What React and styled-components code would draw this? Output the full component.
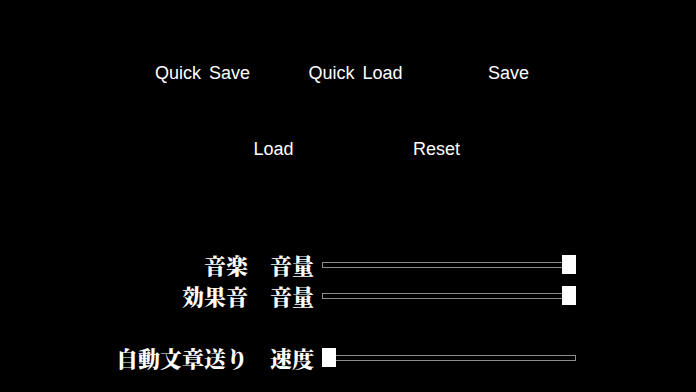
import React from "react";
import styled, { createGlobalStyle } from "styled-components";

const GlobalStyle = createGlobalStyle`
  html, body {
    margin: 0;
    padding: 0;
    background: #000;
  }
`;

const Screen = styled.div`
  width: 696px;
  height: 392px;
  background: #000;
  color: #fff;
  overflow: hidden;
  display: flex;
  flex-direction: column;
`;

const Menu = styled.nav`
  margin-top: 61px;
  display: flex;
  flex-direction: column;
  gap: 52px;
`;

const MenuRow = styled.div`
  display: flex;
  justify-content: center;
  padding-left: ${(p) => p.shift || 0}px;
`;

const MenuButton = styled.button`
  width: ${(p) => p.w}px;
  height: 24px;
  padding: 0;
  border: none;
  background: transparent;
  color: #fff;
  font-family: "Liberation Sans", "Noto Sans CJK JP", sans-serif;
  font-size: 18px;
  line-height: 24px;
  word-spacing: 3px;
  text-align: center;
  cursor: pointer;
`;

const Settings = styled.div`
  margin-top: 88px;
  display: grid;
  grid-template-columns: 314px 254px;
  column-gap: 8px;
  grid-auto-rows: 31px;
`;

const Label = styled.div`
  text-align: right;
  font-family: "Noto Serif CJK JP", "Noto Sans CJK JP", serif;
  font-weight: 900;
  font-size: 22px;
  line-height: 31px;
  white-space: pre;
  margin-top: ${(p) => (p.spaced ? 31 : 0)}px;
`;

const Slider = styled.div`
  position: relative;
  height: 31px;
  margin-top: ${(p) => (p.spaced ? 31 : 0)}px;
  display: flex;
  align-items: center;
`;

const Track = styled.div`
  width: 100%;
  height: 6px;
  box-sizing: border-box;
  border: 1px solid #8c8c8c;
  background: #000;
`;

const Thumb = styled.div`
  position: absolute;
  top: 6px;
  width: 14px;
  height: 19px;
  background: #fff;
`;

const SLIDER_W = 254;
const THUMB_W = 14;

const SliderRow = ({ label, value, spaced }) => (
  <>
    <Label spaced={spaced}>{label}</Label>
    <Slider spaced={spaced}>
      <Track />
      <Thumb style={{ left: value * (SLIDER_W - THUMB_W) }} />
    </Slider>
  </>
);

export default function App() {
  return (
    <>
      <GlobalStyle />
      <Screen>
        <Menu>
          <MenuRow shift={15}>
            <MenuButton w={153}>Quick Save</MenuButton>
            <MenuButton w={153}>Quick Load</MenuButton>
            <MenuButton w={153}>Save</MenuButton>
          </MenuRow>
          <MenuRow shift={14}>
            <MenuButton w={163}>Load</MenuButton>
            <MenuButton w={163}>Reset</MenuButton>
          </MenuRow>
        </Menu>
        <Settings>
          <SliderRow label="音楽　音量" value={1} />
          <SliderRow label="効果音　音量" value={1} />
          <SliderRow label="自動文章送り　速度" value={0} spaced />
        </Settings>
      </Screen>
    </>
  );
}
